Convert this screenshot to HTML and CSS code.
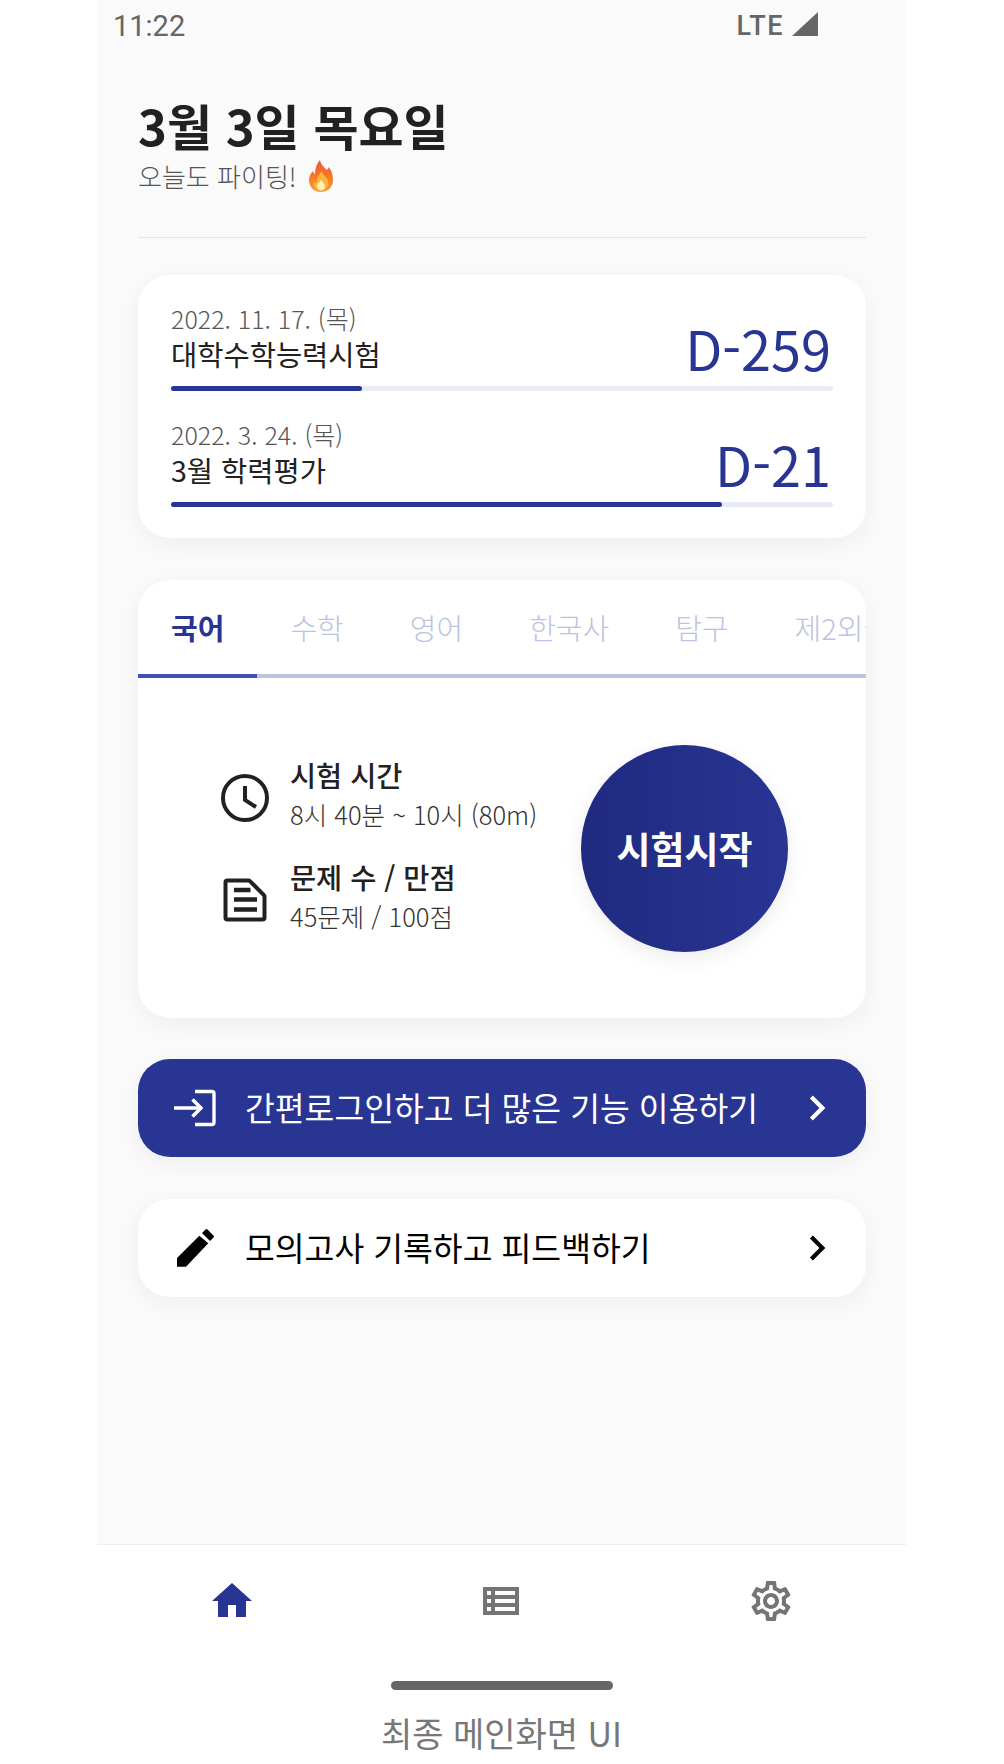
FILE: index.html
```html
<!DOCTYPE html>
<html lang="ko">
<head>
    <meta charset="UTF-8">
    <meta name="viewport" content="width=device-width, initial-scale=1.0">
    <title>최종 메인화면 UI</title>
    <link rel="stylesheet" href="styles.css">
</head>
<body>
    <div class="phone">
        <main class="screen">
            <!-- Status Bar -->
            <div class="status">
                <span class="time">11:22</span>
                <span class="signal">
                    <span class="lte">LTE</span>
                    <svg class="signal-icon" viewBox="0 0 26 24"><path d="M26 0V24H0z"/></svg>
                </span>
            </div>

            <!-- Date Header -->
            <header class="head">
                <h1>3월 3일 목요일</h1>
                <p>오늘도 파이팅!
                    <svg class="flame" viewBox="0 0 24 32">
                        <defs>
                            <linearGradient id="flameOuter" x1="0" y1="0" x2="0" y2="1">
                                <stop offset="0" stop-color="#f1552c"/>
                                <stop offset="1" stop-color="#fb9c2c"/>
                            </linearGradient>
                        </defs>
                        <path fill="url(#flameOuter)" d="M11 0C12 5 15 7 18 10C19 9 19.500 8 19.500 7C22.500 10 24 15 24 20C24 27 19 32 12 32C5 32 0 27 0 20C0 16 2 13 4 11C4.500 12.500 5 13.500 6 14C6 9 7.500 3.500 11 0z"/>
                        <path fill="#fcb73c" d="M12.500 11C13 14 17 16.500 19 20.500C20.500 25.500 17 30.500 12 30.500S3.500 26 5 21.500C5.700 22.500 6.500 23 7.500 23C7.500 19 10 15 12.500 11z"/>
                        <path fill="#fff0b8" d="M12 20C13.500 22 16 24 16 26.500S14 30.500 12 30.500S8 29 8 26.500S10.500 22.500 12 20z"/>
                    </svg>
                </p>
            </header>

            <!-- D-Day Card -->
            <section class="card dday">
                <div class="dday-row">
                    <div class="dday-top">
                        <div class="dday-label">
                            <div class="dday-date">2022. 11. 17. (목)</div>
                            <div class="dday-name">대학수학능력시험</div>
                        </div>
                        <div class="dday-count">D-259</div>
                    </div>
                    <div class="track"><div class="fill" style="width: 28.8%"></div></div>
                </div>
                <div class="dday-row">
                    <div class="dday-top">
                        <div class="dday-label">
                            <div class="dday-date">2022. 3. 24. (목)</div>
                            <div class="dday-name">3월 학력평가</div>
                        </div>
                        <div class="dday-count">D-21</div>
                    </div>
                    <div class="track"><div class="fill" style="width: 83.2%"></div></div>
                </div>
            </section>

            <!-- Subject Card -->
            <section class="card subject">
                <ul class="tabs">
                    <li class="tab active">국어</li>
                    <li class="tab">수학</li>
                    <li class="tab">영어</li>
                    <li class="tab">한국사</li>
                    <li class="tab">탐구</li>
                    <li class="tab">제2외국어</li>
                </ul>
                <div class="subject-body">
                    <div class="info">
                        <div class="info-row">
                            <svg class="info-icon" viewBox="0 0 58 58">
                                <circle cx="29" cy="29" r="22"/>
                                <path d="M29 17V31L40 38"/>
                            </svg>
                            <div>
                                <div class="info-title">시험 시간</div>
                                <div class="info-sub">8시 40분 ~ 10시 (80m)</div>
                            </div>
                        </div>
                        <div class="info-row">
                            <svg class="info-icon" viewBox="0 0 58 58">
                                <path d="M11.500 9.500H32.500a2 2 0 0 1 1.400.6L47.900 24.100a2 2 0 0 1 .6 1.400V46.500a2 2 0 0 1-2 2H11.500a2 2 0 0 1-2-2V11.500a2 2 0 0 1 2-2z"/>
                                <path class="doc-lines" d="M18 19H34.500M18 28.500H41M18 38.500H41"/>
                            </svg>
                            <div>
                                <div class="info-title">문제 수 / 만점</div>
                                <div class="info-sub">45문제 / 100점</div>
                            </div>
                        </div>
                    </div>
                    <button class="start">시험시작</button>
                </div>
            </section>

            <!-- Action Buttons -->
            <a class="action primary">
                <svg class="action-icon login" viewBox="0 0 52 52"><path d="M5 26H33M23.500 17.500L32 26L23.500 34.500M26 9.500H43a2 2 0 0 1 2 2V40.500a2 2 0 0 1-2 2H26"/></svg>
                <span class="action-text">간편로그인하고 더 많은 기능 이용하기</span>
                <svg class="action-arrow" viewBox="0 0 24 24"><path d="M10 6L8.590 7.410 13.170 12l-4.580 4.590L10 18l6-6z"/></svg>
            </a>
            <a class="action">
                <svg class="action-icon" viewBox="0 0 52 52"><path d="M8 36L30.300 13.700L39.300 21.300L17 44.700H8zM33 11L36.500 7.500Q37.500 6.500 38.500 7.500L44.500 13.500Q45.500 14.500 44.500 15.500L41 19z"/></svg>
                <span class="action-text">모의고사 기록하고 피드백하기</span>
                <svg class="action-arrow" viewBox="0 0 24 24"><path d="M10 6L8.590 7.410 13.170 12l-4.580 4.590L10 18l6-6z"/></svg>
            </a>
        </main>

        <!-- Bottom Navigation -->
        <nav class="nav">
            <svg class="nav-icon current" viewBox="0 0 24 24"><path d="M10 20v-6h4v6h5v-8h3L12 3 2 12h3v8z"/></svg>
            <svg class="nav-icon" viewBox="0 0 24 24"><path d="M3 5v14h18V5H3zm2 4V7h2v2H5zm0 4v-2h2v2H5zm0 4v-2h2v2H5zm14 0H9v-2h10v2zm0-4H9v-2h10v2zm0-4H9V7h10v2z"/></svg>
            <svg class="nav-icon" viewBox="0 0 24 24"><path d="M19.430 12.980c.04-.32.07-.64.07-.98 0-.34-.03-.66-.07-.98l2.110-1.650c.19-.15.24-.42.12-.64l-2-3.460c-.09-.16-.26-.25-.44-.25-.06 0-.12.01-.17.03l-2.490 1c-.52-.4-1.080-.73-1.690-.98l-.38-2.650C14.460 2.180 14.250 2 14 2h-4c-.25 0-.46.18-.49.42l-.38 2.650c-.61.25-1.170.59-1.690.98l-2.490-1c-.06-.02-.12-.03-.18-.03-.17 0-.34.09-.43.25l-2 3.460c-.13.22-.07.49.12.64l2.110 1.650c-.04.32-.07.65-.07.98 0 .33.03.66.07.98l-2.110 1.650c-.19.15-.24.42-.12.64l2 3.460c.09.16.26.25.44.25.06 0 .12-.01.17-.03l2.490-1c.52.4 1.080.73 1.690.98l.38 2.650c.03.24.24.42.49.42h4c.25 0 .46-.18.49-.42l.38-2.650c.61-.25 1.170-.59 1.690-.98l2.490 1c.06.02.12.03.18.03.17 0 .34-.09.43-.25l2-3.460c.12-.22.07-.49-.12-.64l-2.110-1.650zm-1.980-1.710c.04.31.05.52.05.73 0 .21-.02.43-.05.73l-.14 1.130.89.7 1.080.84-.7 1.210-1.270-.51-1.040-.42-.9.68c-.43.32-.84.56-1.250.73l-1.060.43-.16 1.130-.2 1.350h-1.400l-.19-1.350-.16-1.130-1.060-.43c-.43-.18-.83-.41-1.230-.71l-.91-.7-1.060.43-1.270.51-.7-1.210 1.080-.84.89-.7-.14-1.130c-.03-.31-.05-.54-.05-.74s.02-.43.05-.73l.14-1.130-.89-.7-1.080-.84.7-1.210 1.270.51 1.040.42.9-.68c.43-.32.84-.56 1.250-.73l1.060-.43.16-1.130.2-1.350h1.390l.19 1.350.16 1.130 1.060.43c.43.18.83.41 1.230.71l.91.7 1.060-.43 1.270-.51.7 1.210-1.070.85-.89.7.14 1.130zM12 8c-2.210 0-4 1.790-4 4s1.790 4 4 4 4-1.790 4-4-1.790-4-4-4zm0 6c-1.100 0-2-.9-2-2s.9-2 2-2 2 .9 2 2-.9 2-2 2z"/></svg>
        </nav>
        <div class="home-bar"></div>
    </div>
    <p class="caption">최종 메인화면 UI</p>
</body>
</html>
```

FILE: styles.css
```css
* { box-sizing: border-box; }
body { margin: 0; background: #fff; font-family: "Noto Sans CJK KR", "Noto Sans", sans-serif; color: #212121; }
ul { list-style: none; margin: 0; padding: 0; }

.phone { width: 809px; margin-left: 97px; }
.screen { height: 1544px; padding: 0 40px 0 41px; background: #fafafa; }

/* Status Bar */
.status { height: 52px; margin: 0 -40px 0 -41px; padding: 0 88px 0 16px; display: flex; justify-content: space-between; align-items: center; color: #666; }
.time { font-family: Roboto, sans-serif; font-size: 29px; }
.signal { display: flex; align-items: center; gap: 8px; }
.lte { font-family: Roboto, sans-serif; font-size: 27px; font-weight: 500; letter-spacing: 1.5px; }
.signal-icon { width: 26px; height: 24px; fill: #666; margin-bottom: 4px; }

/* Date Header */
.head { height: 186px; padding-top: 41px; border-bottom: 1px solid #e6e6e6; }
.head h1 { margin: 0; font-size: 49px; line-height: 64px; font-weight: 700; }
.head p { margin: 0; font-size: 26px; line-height: 38px; font-weight: 300; color: #555; display: flex; align-items: center; gap: 13px; }
.flame { width: 24px; height: 32px; }

/* Cards */
.card { background: #fff; border-radius: 32px; box-shadow: 0 6px 24px rgba(0, 0, 0, 0.05); }
.dday { height: 263px; margin-top: 37px; padding: 27px 33px 0; }
.dday-row { height: 115.5px; }
.dday-top { height: 84px; display: flex; justify-content: space-between; align-items: flex-end; }
.dday-label { padding-bottom: 13px; }
.dday-date { font-size: 25px; line-height: 33px; font-weight: 300; color: #555; }
.dday-name { font-size: 28.5px; line-height: 38px; color: #212121; }
.dday-count { padding: 0 2px 7px 0; font-size: 54px; line-height: 62px; color: #283593; }
.track { height: 5px; border-radius: 3px; background: #e8eaf6; }
.fill { height: 100%; border-radius: 3px; background: #283593; }

/* Subject Card */
.subject { height: 438px; margin-top: 42px; overflow: hidden; }
.tabs { height: 98px; display: flex; border-bottom: 4px solid #c0c4de; }
.tab { flex: none; height: 98px; padding: 0 33px; font-size: 29px; line-height: 94px; font-weight: 300; color: #bcc2e2; white-space: nowrap; }
.tab.active { border-bottom: 4px solid #3f51b5; font-weight: 700; color: #283593; }
.subject-body { height: 340px; padding: 0 0 0 82px; display: flex; align-items: center; }
.info { width: 361px; margin-bottom: 7px; display: flex; flex-direction: column; gap: 27px; }
.info-row { display: flex; align-items: center; gap: 16px; }
.info-icon { width: 58px; height: 58px; flex: none; margin: 9px 0 0 -4px; fill: none; stroke: #212121; stroke-width: 4; }
.info-icon .doc-lines { stroke-width: 4.6; }
.info-title { font-size: 28.4px; line-height: 38px; font-weight: 500; }
.info-sub { margin-top: 3px; font-size: 25.5px; line-height: 34px; font-weight: 300; color: #333; white-space: nowrap; }
.start { width: 207px; height: 207px; border: 0; border-radius: 50%; background: linear-gradient(90deg, #1f2a7f, #283593); box-shadow: 0 6px 20px rgba(0, 0, 0, 0.08); font-family: inherit; font-size: 37px; font-weight: 700; color: #fff; }

/* Action Buttons */
.action { height: 98px; margin-top: 42px; padding: 0 24px 0 31px; display: flex; align-items: center; border-radius: 32px; background: #fff; box-shadow: 0 6px 24px rgba(0, 0, 0, 0.05); color: #000; fill: #000; }
.action.primary { margin-top: 41px; background: #283593; color: #fff; fill: #fff; }
.action-icon { width: 52px; height: 52px; flex: none; }
.action-icon.login { fill: none; stroke: #fff; stroke-width: 3.4; }
.action-text { margin-left: 24px; padding-bottom: 4px; flex: 1; font-size: 32.4px; white-space: nowrap; }
.action-arrow { width: 50px; height: 50px; flex: none; }

/* Bottom Navigation */
.nav { height: 116px; display: flex; background: #fff; border-top: 1px solid #eee; align-items: center; justify-content: space-around; padding-bottom: 4px; }
.nav-icon { width: 48px; height: 48px; fill: #757575; }
.nav-icon.current { fill: #283593; }
.home-bar { width: 222px; height: 9px; margin: 21px auto 0; border-radius: 5px; background: #666; }

.caption { width: 809px; margin: 19px 0 0 97px; text-align: center; font-size: 34px; line-height: 48px; color: #777; }
```
